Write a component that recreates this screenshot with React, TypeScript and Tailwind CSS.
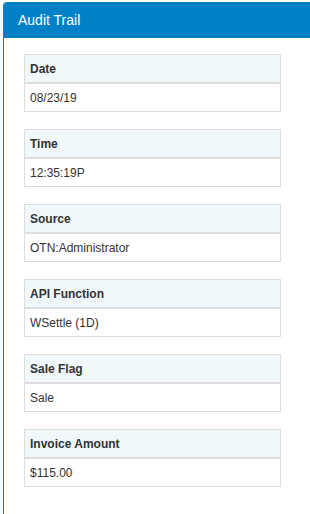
const fields = [
  { label: 'Date', value: '08/23/19' },
  { label: 'Time', value: '12:35:19P' },
  { label: 'Source', value: 'OTN:Administrator' },
  { label: 'API Function', value: 'WSettle (1D)' },
  { label: 'Sale Flag', value: 'Sale' },
  { label: 'Invoice Amount', value: '$115.00' },
];

export default function App() {
  return (
    <div
      className="min-h-screen bg-white pt-[2px] pl-[3px] overflow-hidden"
      style={{ fontFamily: '"Liberation Sans", Arial, sans-serif' }}
    >
      <div className="w-[330px] min-h-[512px] border-l border-[#0a7fc2] rounded-tl-[4px] overflow-hidden">
        <div className="h-[36px] bg-[#0081c7] text-white text-[14px] pl-[14px] flex items-center">
          Audit Trail
        </div>
        <div className="pt-[16px] pl-[20px] flex flex-col gap-[17px]">
          {fields.map((f) => (
            <div key={f.label} className="w-[257px] border border-[#dddddd] text-[12px] text-[#333333]">
              <div className="h-[29px] bg-[#f1f8fc] border-b-2 border-[#dddddd] pl-[5px] flex items-center font-bold">
                {f.label}
              </div>
              <div className="h-[27px] pl-[5px] flex items-center">{f.value}</div>
            </div>
          ))}
        </div>
      </div>
    </div>
  );
}
